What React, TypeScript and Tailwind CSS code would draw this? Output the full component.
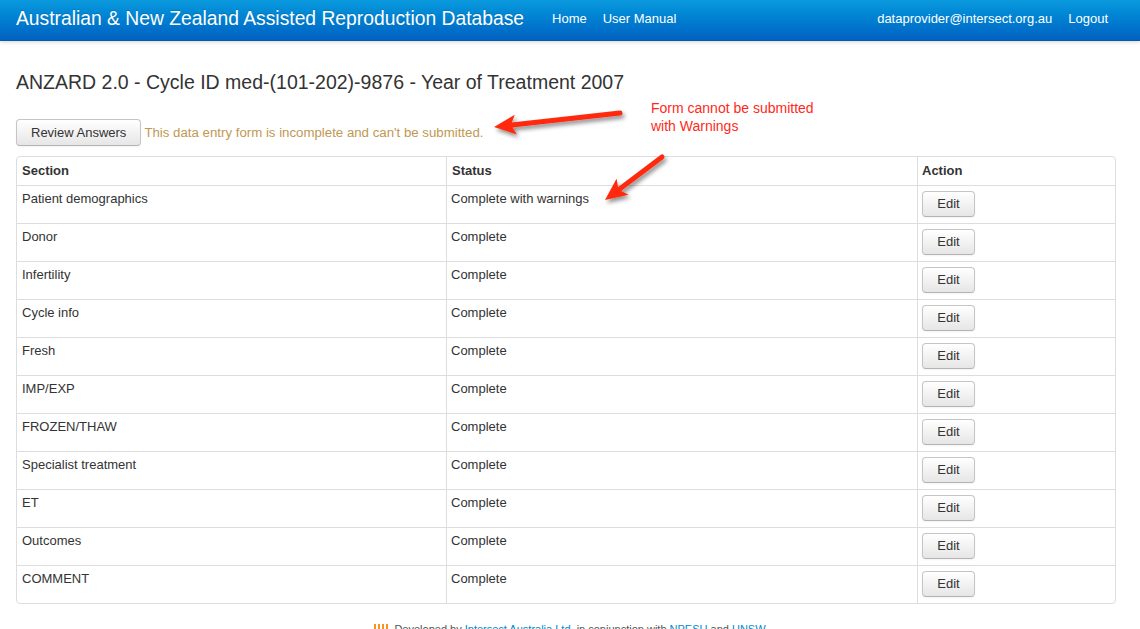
const rows = [
  ['Patient demographics', 'Complete with warnings'],
  ['Donor', 'Complete'],
  ['Infertility', 'Complete'],
  ['Cycle info', 'Complete'],
  ['Fresh', 'Complete'],
  ['IMP/EXP', 'Complete'],
  ['FROZEN/THAW', 'Complete'],
  ['Specialist treatment', 'Complete'],
  ['ET', 'Complete'],
  ['Outcomes', 'Complete'],
  ['COMMENT', 'Complete'],
]

const btn =
  'rounded-[4px] border border-[#c5c5c5] border-b-[#b3b3b3] bg-gradient-to-b from-white to-[#e6e6e6] text-[13px] leading-[18px] text-[#333] shadow-[inset_0_1px_0_rgba(255,255,255,0.2),0_1px_2px_rgba(0,0,0,0.05)]'

function Arrow({ x1, y1, x2, y2 }: { x1: number; y1: number; x2: number; y2: number }) {
  const dx = x2 - x1
  const dy = y2 - y1
  const len = Math.sqrt(dx * dx + dy * dy)
  const ux = dx / len
  const uy = dy / len
  const px = -uy
  const py = ux
  const head = 22
  const half = 10
  const bx = x2 - ux * head
  const by = y2 - uy * head
  const pts = `${x2},${y2} ${bx + px * half},${by + py * half} ${bx + ux * 5},${by + uy * 5} ${bx - px * half},${by - py * half}`
  return (
    <g filter="url(#shadow)">
      <line x1={x1} y1={y1} x2={bx + ux * 4} y2={by + uy * 4} stroke="#ff2a10" strokeWidth={5} strokeLinecap="round" />
      <polygon points={pts} fill="#ff2a10" />
    </g>
  )
}

export default function App() {
  return (
    <div className="relative min-h-[629px] bg-white text-[#333]" style={{ fontFamily: '"Liberation Sans", Arial, sans-serif' }}>
      <div className="h-[41px] border-b border-[#0a57ad] bg-gradient-to-b from-[#0b9ade] to-[#0161c2] shadow-[0_1px_4px_rgba(0,0,0,0.18)]">
        <div className="flex h-full items-center px-4 pb-[2px]">
          <span className="text-[19.3px] text-white [text-shadow:0_-1px_0_rgba(0,0,0,0.15)]">
            Australian &amp; New Zealand Assisted Reproduction Database
          </span>
          <nav className="ml-[28px] flex gap-4 text-[13px] text-white">
            <a>Home</a>
            <a>User Manual</a>
          </nav>
          <nav className="ml-auto mr-[16px] flex gap-4 text-[13px] text-white">
            <a>dataprovider@intersect.org.au</a>
            <a>Logout</a>
          </nav>
        </div>
      </div>

      <div className="px-4">
        <h1 className="mt-[27px] text-[19.5px] leading-[28px] text-[#333]">
          ANZARD 2.0 - Cycle ID med-(101-202)-9876 - Year of Treatment 2007
        </h1>

        <div className="mt-[23px] flex items-center gap-[3px]">
          <button className={`${btn} h-[27px] px-[14px]`}>Review Answers</button>
          <span className="text-[13.25px] text-[#c09853]">This data entry form is incomplete and can't be submitted.</span>
        </div>

        <table className="mt-[10px] w-[1100px] table-fixed border-separate border-spacing-0 rounded-[4px] border border-[#dddddd] text-[13px] leading-[18px]">
          <colgroup>
            <col className="w-[429px]" />
            <col className="w-[471px]" />
            <col />
          </colgroup>
          <thead>
            <tr>
              <th className="px-[5px] py-[5px] text-left font-bold">Section</th>
              <th className="border-l border-[#dddddd] px-[5px] py-[5px] text-left font-bold">Status</th>
              <th className="border-l border-[#dddddd] px-[4px] py-[5px] text-left font-bold">Action</th>
            </tr>
          </thead>
          <tbody>
            {rows.map(([s, st]) => (
              <tr key={s}>
                <td className="h-[38px] border-t border-[#dddddd] px-[5px] pt-[4px] align-top">{s}</td>
                <td className="border-l border-t border-[#dddddd] px-[4px] pt-[4px] align-top">{st}</td>
                <td className="border-l border-t border-[#dddddd] px-[4px] pb-[5px] pt-[5px] align-top">
                  <button className={`${btn} h-[26px] w-[53px]`}>Edit</button>
                </td>
              </tr>
            ))}
          </tbody>
        </table>

        <div className="mt-[17px] flex items-center justify-center gap-[6px] text-[11px] text-[#555]">
          <span className="flex gap-[2px]">
            <span className="h-[10px] w-[2px] bg-[#f7941d]" />
            <span className="h-[10px] w-[2px] bg-[#f7941d]" />
            <span className="h-[10px] w-[2px] bg-[#f7941d]" />
            <span className="h-[10px] w-[2px] bg-[#f7941d]" />
          </span>
          <span>
            Developed by <a className="text-[#0088cc]">Intersect Australia Ltd.</a> in conjunction with{' '}
            <a className="text-[#0088cc]">NPESU</a> and <a className="text-[#0088cc]">UNSW</a>
          </span>
        </div>
      </div>

      <div className="absolute left-[651px] top-[99px] text-[14px] leading-[18px] text-[#ff2a1a]">
        Form cannot be submitted
        <br />
        with Warnings
      </div>

      <svg className="pointer-events-none absolute left-0 top-0" width="1140" height="629">
        <defs>
          <filter id="shadow" x="-20%" y="-50%" width="140%" height="200%">
            <feDropShadow dx="2" dy="3" stdDeviation="2" floodColor="#000" floodOpacity="0.45" />
          </filter>
        </defs>
        <Arrow x1={620} y1={113} x2={494} y2={127} />
        <Arrow x1={662} y1={157} x2={605} y2={200} />
      </svg>
    </div>
  )
}
